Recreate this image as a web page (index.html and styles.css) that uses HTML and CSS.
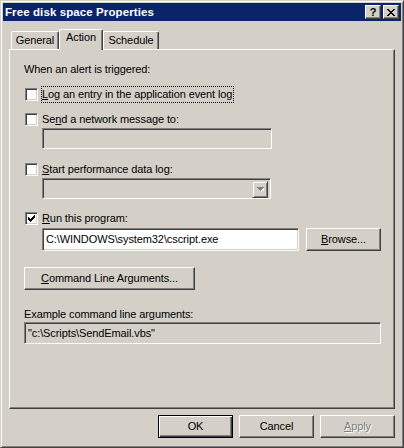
FILE: index.html
```html
<!DOCTYPE html>
<html>
<head>
<meta charset="utf-8">
<link rel="stylesheet" href="styles.css">
</head>
<body>
<div class="window">
  <div class="titlebar">
    <span class="title">Free disk space Properties</span>
    <div class="caps">
      <span class="capbtn help">?</span>
      <span class="capbtn close"><svg width="8" height="7" viewBox="0 0 8 7"><path d="M0 0h2v1h-2zM6 0h2v1h-2zM1 1h2v1h-2zM5 1h2v1h-2zM2 2h4v1h-4zM3 3h2v1h-2zM2 4h4v1h-4zM1 5h2v1h-2zM5 5h2v1h-2zM0 6h2v1h-2zM6 6h2v1h-2z" fill="#000"/></svg></span>
    </div>
  </div>
  <div class="tabs">
    <div class="tab t-general">General</div>
    <div class="tab t-action sel">Action</div>
    <div class="tab t-schedule">Schedule</div>
  </div>
  <div class="panel">
    <div class="heading">When an alert is triggered:</div>
    <div class="row r1"><span class="cb"></span><span class="lbl focus"><u>L</u>og an entry in the application event log</span></div>
    <div class="row r2"><span class="cb"></span><span class="lbl">Se<u>n</u>d a network message to:</span></div>
    <div class="field disabled f-net"></div>
    <div class="row r3"><span class="cb"></span><span class="lbl"><u>S</u>tart performance data log:</span></div>
    <div class="field disabled combo"><span class="dd"><svg width="7" height="5" viewBox="0 0 7 5"><path d="M1 1h7v1h-7z M2 2h5v1h-5z M3 3h3v1h-3z M4 4h1v1h-1z" fill="#fff"/><path d="M0 0h7v1h-7zM1 1h5v1h-5zM2 2h3v1h-3zM3 3h1v1h-1z" fill="#808080"/></svg></span></div>
    <div class="row r4"><span class="cb"><svg width="9" height="9" viewBox="0 0 9 9"><path transform="translate(1 1)" d="M6 0h1v1h-1zM5 1h2v1h-2zM0 2h1v1h-1zM4 2h3v1h-3zM0 3h2v1h-2zM3 3h3v1h-3zM0 4h5v1h-5zM1 5h3v1h-3zM2 6h1v1h-1z" fill="#000"/></svg></span><span class="lbl"><u>R</u>un this program:</span></div>
    <div class="prog">
      <div class="field f-prog">C:\WINDOWS\system32\cscript.exe</div>
      <div class="btn browse"><u>B</u>rowse...</div>
    </div>
    <div class="btn cla"><u>C</u>ommand Line Arguments...</div>
    <div class="example">Example command line arguments:</div>
    <div class="field disabled f-ex">"c:\Scripts\SendEmail.vbs"</div>
  </div>
  <div class="footer">
    <div class="btn def">OK</div>
    <div class="btn">Cancel</div>
    <div class="btn dis"><u>A</u>pply</div>
  </div>
</div>
</body>
</html>
```
FILE: styles.css
```css
* { box-sizing: border-box; }
body {
  margin: 0;
  background: #d4d0c8;
  font-family: "Liberation Sans", Arial, sans-serif;
  font-size: 11px;
  letter-spacing: -0.1px;
  color: #000;
}
u { text-decoration: underline; text-underline-offset: 1px; }
.window {
  width: 404px;
  height: 448px;
  border: 1px solid;
  border-color: #d4d0c8 #404040 #404040 #d4d0c8;
  box-shadow: inset 1px 1px #fff, inset -1px -1px #808080;
  padding: 2px;
  display: flex;
  flex-direction: column;
}
.titlebar {
  height: 18px;
  background: #0a246a;
  color: #fff;
  display: flex;
  align-items: center;
  padding: 0 2px 0 2px;
}
.title {
  flex: 1;
  font-weight: bold;
  font-size: 11.5px;
  letter-spacing: 0.1px;
}
.caps { display: flex; gap: 1px; }
.capbtn {
  width: 16px;
  height: 14px;
  background: #d4d0c8;
  border: 1px solid;
  border-color: #fff #404040 #404040 #fff;
  box-shadow: inset -1px -1px #808080;
  display: flex;
  align-items: center;
  justify-content: center;
  color: #000;
  font-weight: bold;
  font-size: 11px;
  line-height: 12px;
}
.capbtn.close { margin-left: 1px; }
.tabs {
  margin-top: 8px;
  height: 20px;
  display: flex;
  align-items: flex-end;
  padding-left: 8px;
}
.tab {
  height: 18px;
  border-top: 1px solid #fff;
  border-left: 1px solid #fff;
  border-right: 1px solid #404040;
  box-shadow: inset -1px 0 #808080;
  border-radius: 2px 2px 0 0;
  text-align: center;
  line-height: 14px;
  padding-top: 1px;
  background: #d4d0c8;
}
.t-general { width: 48px; }
.t-action { width: 44px; }
.t-schedule { width: 56px; }
.tab.sel {
  height: 21px;
  margin-bottom: -1px;
  position: relative;
  z-index: 1;
  line-height: 13px;
  padding-top: 1px;
}
.panel {
  margin: 0 6px;
  height: 360px;
  border: 1px solid;
  border-color: #fff #404040 #404040 #fff;
  box-shadow: inset -1px -1px #808080;
  padding: 13px 14px 0 14px;
  display: flex;
  flex-direction: column;
  align-items: flex-start;
}
.heading, .example { line-height: 13px; height: 13px; }
.row {
  display: flex;
  align-items: center;
  height: 17px;
}
.r1 { margin-top: 10px; }
.r2 { margin-top: 8px; }
.r3 { margin-top: 12px; }
.r4 { margin-top: 11px; }
.cb {
  width: 13px;
  height: 13px;
  margin-left: 1px;
  background: #fff;
  border: 1px solid;
  border-color: #808080 #fff #fff #808080;
  box-shadow: inset 1px 1px #404040, inset -1px -1px #d4d0c8;
  display: flex;
  align-items: flex-start;
  justify-content: flex-start;
  padding: 1px 0 0 1px;
}
.cb svg { display: block; }
.lbl {
  margin-left: 3px;
  line-height: 13px;
  border: 1px solid transparent;
  padding: 1px 1px 1px 0;
}
.lbl.focus { border: 1px dotted #000; }
.field {
  height: 21px;
  background: #fff;
  border: 1px solid;
  border-color: #808080 #fff #fff #808080;
  box-shadow: inset 1px 1px #404040, inset -1px -1px #d4d0c8;
  padding: 3px 3px 0 3px;
  line-height: 13px;
  white-space: nowrap;
}
.field.disabled { background: #d4d0c8; }
.f-net { margin-left: 18px; width: 230px; }
.combo {
  margin-left: 18px;
  width: 229px;
  display: flex;
  justify-content: flex-end;
  padding: 2px;
}
.dd {
  width: 16px;
  height: 17px;
  border: 1px solid;
  border-color: #d4d0c8 #404040 #404040 #d4d0c8;
  box-shadow: inset 1px 1px #fff, inset -1px -1px #808080;
  display: flex;
  align-items: center;
  justify-content: center;
}
.dd svg { display: block; }
.prog {
  margin-top: 1px;
  margin-left: 18px;
  display: flex;
  gap: 7px;
}
.f-prog { width: 257px; height: 23px; padding-top: 4px; }
.btn {
  width: 75px;
  height: 23px;
  border: 1px solid;
  border-color: #fff #404040 #404040 #fff;
  box-shadow: inset -1px -1px #808080;
  background: #d4d0c8;
  display: flex;
  align-items: center;
  justify-content: center;
  line-height: 13px;
}
.cla { width: 171px; margin-top: 16px; }
.example { margin-top: 18px; }
.f-ex { margin-top: 1px; width: 357px; height: 22px; padding-top: 4px; }
.footer {
  margin-top: 6px;
  display: flex;
  justify-content: flex-end;
  gap: 6px;
  padding-right: 6px;
}
.btn.def {
  border: 1px solid #000;
  box-shadow: inset 1px 1px #fff, inset -1px -1px #404040, inset -2px -2px #808080;
}
.btn.dis { color: #808080; text-shadow: 1px 1px #fff; }
```
